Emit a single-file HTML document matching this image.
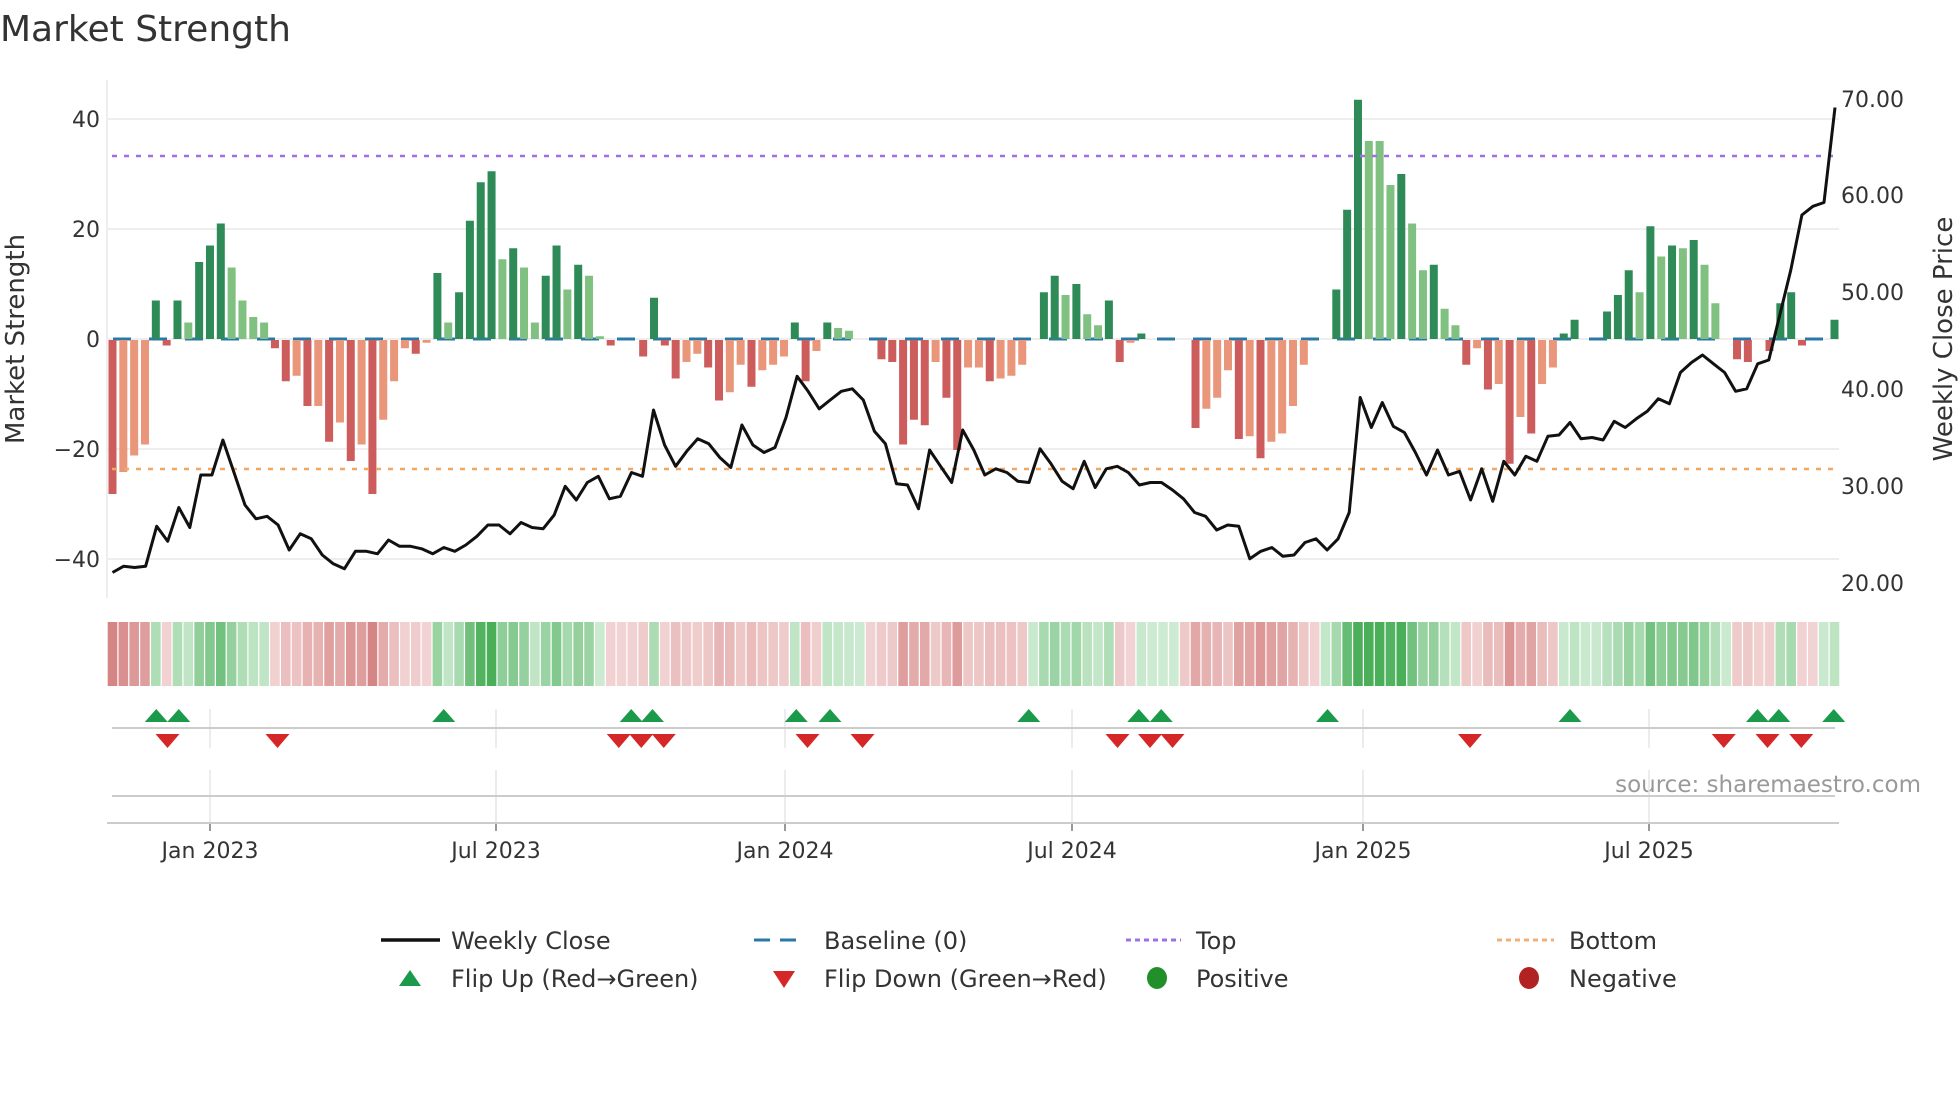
<!DOCTYPE html>
<html><head><meta charset="utf-8">
<style>
html,body{margin:0;padding:0;background:#fff;}
svg{display:block;font-family:"DejaVu Sans","Liberation Sans",sans-serif;}
</style></head>
<body>
<svg id="s" width="1960" height="1102" viewBox="0 0 1960 1102" xmlns="http://www.w3.org/2000/svg">
<text x="0" y="41" font-size="36" fill="#333">Market Strength</text>
<text x="100" y="127" font-size="22" fill="#333" text-anchor="end">40</text>
<text x="100" y="237" font-size="22" fill="#333" text-anchor="end">20</text>
<text x="100" y="347" font-size="22" fill="#333" text-anchor="end">0</text>
<text x="100" y="457" font-size="22" fill="#333" text-anchor="end">−20</text>
<text x="100" y="567" font-size="22" fill="#333" text-anchor="end">−40</text>
<text x="1841" y="107" font-size="22" fill="#333">70.00</text>
<text x="1841" y="203" font-size="22" fill="#333">60.00</text>
<text x="1841" y="300" font-size="22" fill="#333">50.00</text>
<text x="1841" y="397" font-size="22" fill="#333">40.00</text>
<text x="1841" y="494" font-size="22" fill="#333">30.00</text>
<text x="1841" y="591" font-size="22" fill="#333">20.00</text>
<text transform="translate(24,339) rotate(-90)" font-size="26" fill="#333" text-anchor="middle">Market Strength</text>
<text transform="translate(1952,339) rotate(-90)" font-size="26" fill="#333" text-anchor="middle">Weekly Close Price</text>
<text x="1921" y="792" font-size="23" fill="#999" text-anchor="end">source: sharemaestro.com</text>
<g font-size="22" fill="#333" text-anchor="middle">
<text x="210" y="858">Jan 2023</text><text x="496" y="858">Jul 2023</text><text x="785" y="858">Jan 2024</text>
<text x="1072" y="858">Jul 2024</text><text x="1363" y="858">Jan 2025</text><text x="1649" y="858">Jul 2025</text>
</g>
<g font-size="24" fill="#333">
<line x1="381" y1="940" x2="440" y2="940" stroke="#111" stroke-width="3.5"/>
<text x="451" y="949">Weekly Close</text>
<line x1="754" y1="940" x2="806" y2="940" stroke="#2a78a8" stroke-width="3" stroke-dasharray="16,10"/>
<text x="824" y="949">Baseline (0)</text>
<line x1="1126" y1="940" x2="1181" y2="940" stroke="#a070e0" stroke-width="3" stroke-dasharray="5,4"/>
<text x="1196" y="949">Top</text>
<line x1="1497" y1="940" x2="1554" y2="940" stroke="#f0b07a" stroke-width="3" stroke-dasharray="5,4"/>
<text x="1569" y="949">Bottom</text>
<polygon points="399,986 421,986 410,970" fill="#1a9a4a"/>
<text x="451" y="987">Flip Up (Red→Green)</text>
<polygon points="773,971 795,971 784,988" fill="#d62728"/>
<text x="824" y="987">Flip Down (Green→Red)</text>
<ellipse cx="1157" cy="978" rx="10" ry="11" fill="#22902a"/>
<text x="1196" y="987">Positive</text>
<ellipse cx="1529" cy="978" rx="10" ry="11" fill="#b22222"/>
<text x="1569" y="987">Negative</text>
</g>
<g id="g"></g>
</svg>
<script>
var NS="http://www.w3.org/2000/svg",g=document.getElementById('g');
function el(t,a){var e=document.createElementNS(NS,t);for(var k in a)e.setAttribute(k,a[k]);g.appendChild(e);return e;}
[119,229,339,449,559].forEach(function(y){el('line',{x1:108,x2:1839,y1:y,y2:y,stroke:'#eee','stroke-width':2});});
el('line',{x1:107,x2:107,y1:80,y2:598,stroke:'#eee','stroke-width':2});
var ticks=[210,496,785,1072,1363,1649];
ticks.forEach(function(x){el('line',{x1:x,x2:x,y1:709,y2:748,stroke:'#e6e6e6','stroke-width':1.5});el('line',{x1:x,x2:x,y1:770,y2:823,stroke:'#e6e6e6','stroke-width':1.5});el('line',{x1:x,x2:x,y1:823,y2:831,stroke:'#999','stroke-width':2});});
el('line',{x1:112,x2:1835,y1:728,y2:728,stroke:'#ccc','stroke-width':2});
el('line',{x1:112,x2:1835,y1:796,y2:796,stroke:'#ccc','stroke-width':2});
el('line',{x1:107,x2:1839,y1:823,y2:823,stroke:'#ccc','stroke-width':2});
var B=[[-28,'R'],[-24,'S'],[-21,'S'],[-19,'S'],[7,'D'],[-1,'R'],[7,'D'],[3,'L'],[14,'D'],[17,'D'],[21,'D'],[13,'L'],[7,'L'],[4,'L'],[3,'L'],[-1.5,'R'],[-7.5,'R'],[-6.5,'S'],[-12,'R'],[-12,'S'],[-18.5,'R'],[-15,'S'],[-22,'R'],[-19,'S'],[-28,'R'],[-14.5,'S'],[-7.5,'S'],[-1.5,'S'],[-2.5,'R'],[-0.5,'S'],
[12,'D'],[3,'L'],[8.5,'D'],[21.5,'D'],[28.5,'D'],[30.5,'D'],[14.5,'L'],[16.5,'D'],[13,'L'],[3,'L'],[11.5,'D'],[17,'D'],[9,'L'],[13.5,'D'],[11.5,'L'],[0.5,'L'],[-1,'R'],[0,'S'],[0,'S'],[-3,'R'],[7.5,'D'],[-1,'R'],[-7,'R'],[-4,'S'],[-2.5,'S'],[-5,'R'],[-11,'R'],[-9.5,'S'],[-4.5,'S'],[-8.5,'R'],[-5.5,'S'],[-4.5,'S'],[-3,'S'],[3,'D'],[-7.5,'R'],[-2,'S'],[3,'D'],[2,'L'],[1.5,'L'],[0,'S'],[0,'S'],[-3.5,'R'],[-4,'R'],[-19,'R'],[-14.5,'R'],[-15.5,'R'],[-4,'S'],[-10.5,'R'],[-20,'R'],[-5,'S'],[-5,'S'],[-7.5,'R'],[-7,'S'],[-6.5,'S'],[-4.5,'S'],[0,'S'],
[8.5,'D'],[11.5,'D'],[8,'L'],[10,'D'],[4.5,'L'],[2.5,'L'],[7,'D'],[-4,'R'],[-0.5,'S'],[1,'D'],[0,'S'],[0,'S'],[0,'S'],[0,'S'],[-16,'R'],[-12.5,'S'],[-10.5,'S'],[-5.5,'S'],[-18,'R'],[-17.5,'S'],[-21.5,'R'],[-18.5,'S'],[-17,'S'],[-12,'S'],[-4.5,'S'],[0,'S'],[0,'S'],
[9,'D'],[23.5,'D'],[43.5,'D'],[36,'L'],[36,'L'],[28,'L'],[30,'D'],[21,'L'],[12.5,'L'],[13.5,'D'],[5.5,'L'],[2.5,'L'],[-4.5,'R'],[-1.5,'S'],[-9,'R'],[-8,'S'],[-22.5,'R'],[-14,'S'],[-17,'R'],[-8,'S'],[-5,'S'],[1,'D'],[3.5,'D'],[0,'S'],[0,'S'],[5,'D'],[8,'D'],[12.5,'D'],[8.5,'L'],[20.5,'D'],[15,'L'],[17,'D'],[16.5,'L'],[18,'D'],[13.5,'L'],[6.5,'L'],[0,'S'],[-3.5,'R'],[-4,'R'],[0,'S'],[-2,'R'],[6.5,'D'],[8.5,'D'],[-1,'R'],[0,'S'],[0,'S'],[3.5,'D']];
var N=B.length,dx=(1834.5-112.5)/(N-1);
function X(i){return 112.5+i*dx;}
var col={D:'#2e8b57',L:'#80c080',R:'#cd5c5c',S:'#e9967a'};
var sm=[];for(var i=0;i<N;i++){var s=0,c=0;for(var j=-1;j<=1;j++){if(B[i+j]){s+=B[i+j][0]*(j==0?2:1);c+=(j==0?2:1);}}sm.push(s/c);}
for(var i=0;i<N;i++){var v=B[i][0]!==0?B[i][0]:sm[i];var t=Math.min(1,Math.abs(v)/30);var f;
 if(v>=0){f='rgb('+Math.round(205-130*t)+','+Math.round(235-60*t)+','+Math.round(210-120*t)+')';}
 else{f='rgb('+Math.round(242-30*t)+','+Math.round(212-85*t)+','+Math.round(212-85*t)+')';}
 el('rect',{x:X(i)-4.8,y:622,width:9.6,height:64,fill:f});}
el('line',{x1:113,x2:1835,y1:339,y2:339,stroke:'#2a78a8','stroke-width':3,'stroke-dasharray':'18,18'});
for(var i=0;i<N;i++){var v=B[i][0];if(v===0)continue;var h=Math.abs(v)*5.5;el('rect',{x:X(i)-4,y:v>0?339-h:340,width:8,height:h,fill:col[B[i][1]]});}
el('line',{x1:112,x2:1835,y1:156,y2:156,stroke:'#a070e0','stroke-width':2.5,'stroke-dasharray':'5,7'});
el('line',{x1:112,x2:1835,y1:469,y2:469,stroke:'#f0a860','stroke-width':2.5,'stroke-dasharray':'5,7'});
var P=[458,453,454,453,421,433,406,422,380,380,352,378,404,415,413,420,440,427,431,444,451,455,441,441,443,432,437,437,439,443,438,441,436,429,420,420,427,418,422,423,412,389,400,386,381,399,397,378,381,328,356,373,361,351,355,366,374,340,356,362,358,334,301,313,327,320,313,311,320,345,355,387,388,407,360,373,386,344,360,380,375,378,385,386,359,371,385,391,369,390,375,373,378,388,386,386,392,399,410,413,424,420,421,447,441,438,445,444,434,431,440,431,410,318,342,322,341,346,362,380,360,380,377,400,375,401,369,380,365,369,349,348,338,351,350,352,337,342,335,329,319,323,298,290,284,291,298,313,311,291,288,252,216,172,165,162,86];
var pdx=(1835-112.5)/(P.length-1),pts=[];
for(var i=0;i<P.length;i++)pts.push((112.5+i*pdx).toFixed(1)+','+(P[i]*1.25).toFixed(1));
el('polyline',{points:pts.join(' '),fill:'none',stroke:'#111','stroke-width':3,'stroke-linejoin':'round'});
[125,143,355,505,522,637,664,823,911,929,1062,1256,1406,1423,1467].forEach(function(x){x*=1.25;el('polygon',{points:(x-11.5)+',722 '+(x+11.5)+',722 '+x+',709',fill:'#1a9a4a'});});
[134,222,495,513,531,646,690,894,920,938,1176,1379,1414,1441].forEach(function(x){x*=1.25;el('polygon',{points:(x-12)+',734 '+(x+12)+',734 '+x+',748',fill:'#d62728'});});
</script>
</body></html>
